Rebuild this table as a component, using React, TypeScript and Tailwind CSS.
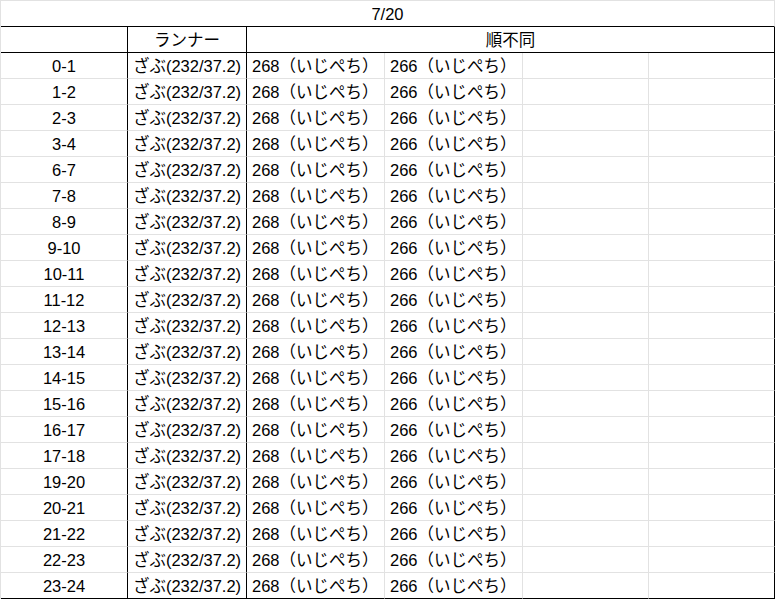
const slots = [
  "0-1", "1-2", "2-3", "3-4", "6-7", "7-8", "8-9", "9-10", "10-11", "11-12", "12-13",
  "13-14", "14-15", "15-16", "16-17", "17-18", "19-20", "20-21", "21-22", "22-23", "23-24",
];

const cell = "h-[26px] flex items-end pb-[3px] leading-[18px] whitespace-nowrap overflow-hidden";

export default function App() {
  return (
    <div
      className="w-[775px] h-[600px] bg-white text-black text-[16.5px]"
      style={{ fontFamily: '"Liberation Sans", "Noto Sans CJK JP", sans-serif' }}
    >
      <div className="grid grid-cols-[127px_119px_138px_138px_126px_126px] border-l border-t border-[#e2e2e2]">
        {/* date row */}
        <div className={`${cell} col-span-6 justify-center border-b border-r border-b-black border-r-[#e2e2e2]`}>7/20</div>

        {/* header row */}
        <div className={`${cell} border-b border-r border-black`} />
        <div className={`${cell} justify-center border-b border-r border-black`}>ランナー</div>
        <div className={`${cell} col-span-4 justify-center border-b border-r border-black`}>順不同</div>

        {slots.map((s, i) => {
          const last = i === slots.length - 1;
          const bottom = last ? "border-b-black" : "border-b-[#e2e2e2]";
          return (
            <div key={s} className="contents">
              <div className={`${cell} justify-center border-b border-r border-r-black ${bottom}`}>{s}</div>
              <div className={`${cell} justify-center border-b border-r border-r-black ${bottom}`}>ざぶ(232/37.2)</div>
              <div className={`${cell} pl-[5px] border-b border-r border-r-[#e2e2e2] ${bottom}`}>268（いじぺち）</div>
              <div className={`${cell} pl-[5px] border-b border-r border-r-[#e2e2e2] ${bottom}`}>266（いじぺち）</div>
              <div className={`${cell} border-b border-r border-r-[#e2e2e2] ${bottom}`} />
              <div className={`${cell} border-b border-r border-r-black ${bottom}`} />
            </div>
          );
        })}
      </div>
    </div>
  );
}
